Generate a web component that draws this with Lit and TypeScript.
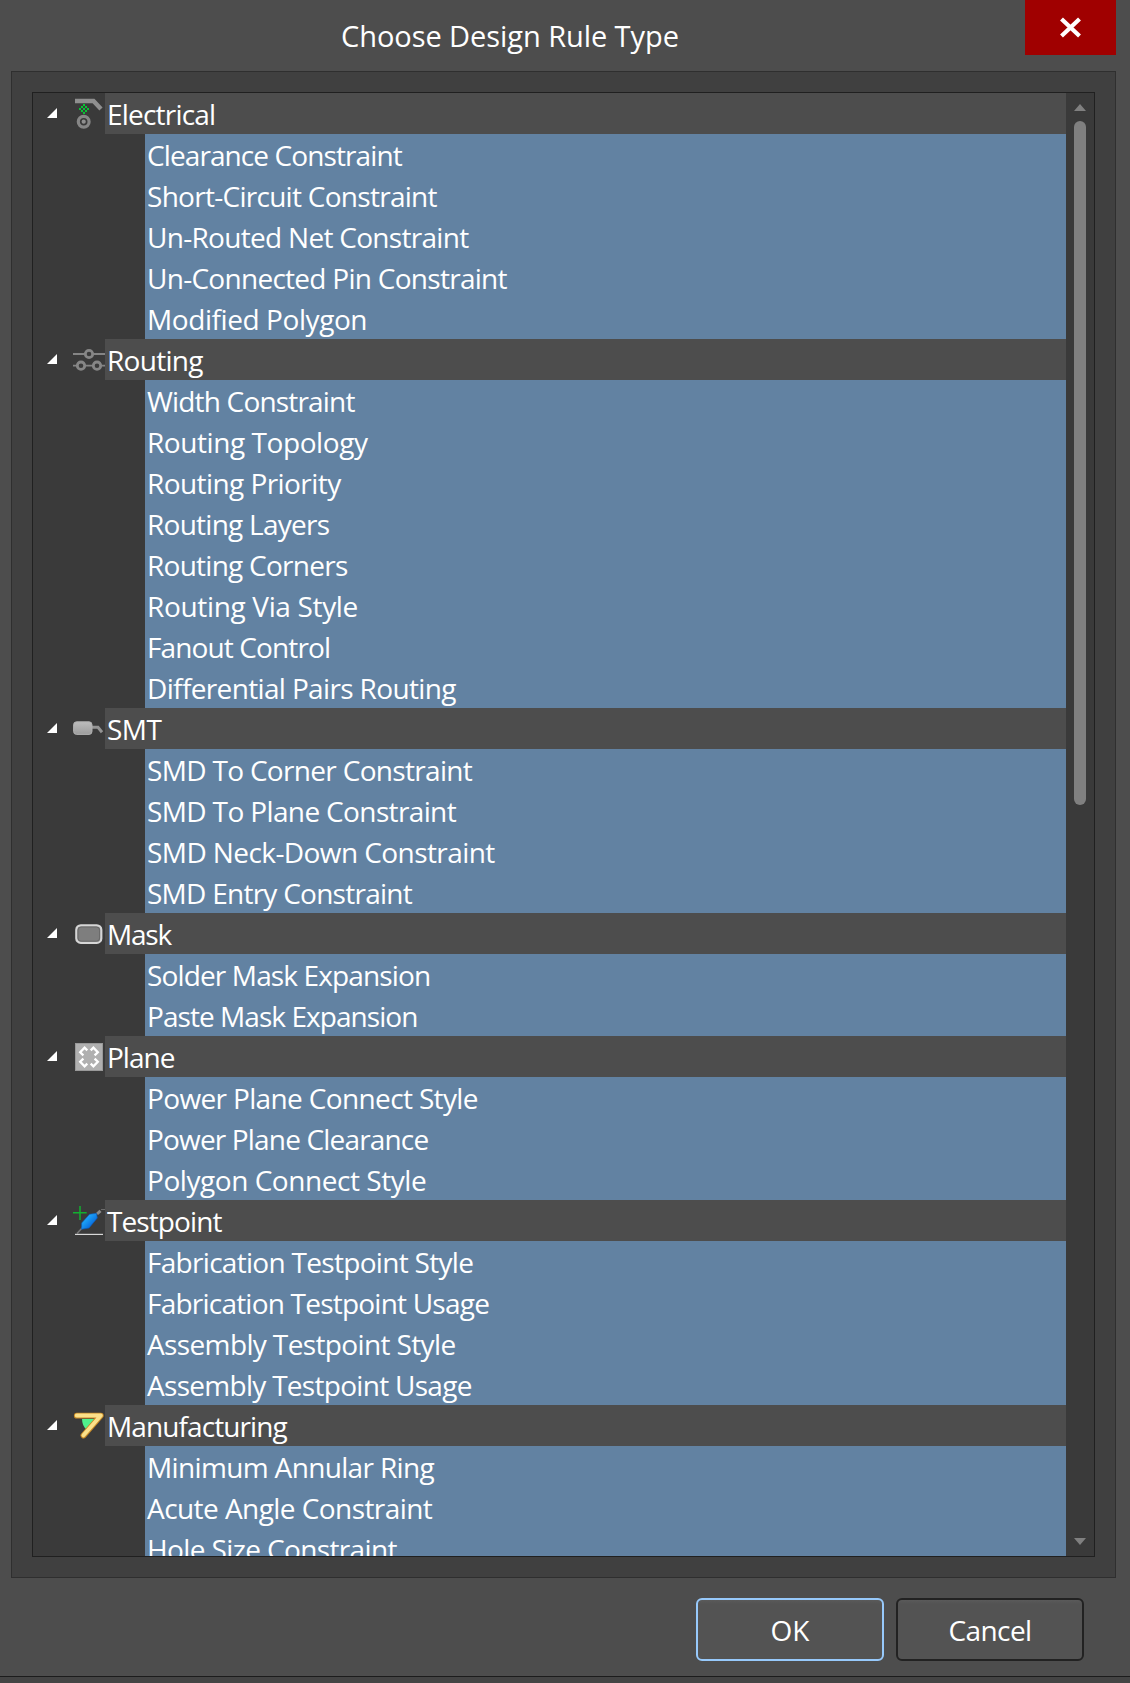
import { LitElement, html, css, svg } from "lit";
import { customElement, property } from "lit/decorators.js";

// A caption and its tracking in pixels.
type Caption = [text: string, tracking: number];

interface RuleGroup {
  name: Caption;
  icon: string;
  rules: Caption[];
}

const GROUPS: RuleGroup[] = [
  {
    name: ["Electrical", -0.8],
    icon: "electrical",
    rules: [
      ["Clearance Constraint", -0.9],
      ["Short-Circuit Constraint", -0.72],
      ["Un-Routed Net Constraint", -0.7],
      ["Un-Connected Pin Constraint", -0.72],
      ["Modified Polygon", -0.42],
    ],
  },
  {
    name: ["Routing", -0.7],
    icon: "routing",
    rules: [
      ["Width Constraint", -0.82],
      ["Routing Topology", -0.43],
      ["Routing Priority", -0.57],
      ["Routing Layers", -0.74],
      ["Routing Corners", -0.74],
      ["Routing Via Style", -0.34],
      ["Fanout Control", -0.88],
      ["Differential Pairs Routing", -0.64],
    ],
  },
  {
    name: ["SMT", -0.5],
    icon: "smt",
    rules: [
      ["SMD To Corner Constraint", -0.68],
      ["SMD To Plane Constraint", -0.63],
      ["SMD Neck-Down Constraint", -0.58],
      ["SMD Entry Constraint", -0.74],
    ],
  },
  {
    name: ["Mask", -1.2],
    icon: "mask",
    rules: [
      ["Solder Mask Expansion", -0.86],
      ["Paste Mask Expansion", -0.94],
    ],
  },
  {
    name: ["Plane", -1],
    icon: "plane",
    rules: [
      ["Power Plane Connect Style", -0.64],
      ["Power Plane Clearance", -0.83],
      ["Polygon Connect Style", -0.45],
    ],
  },
  {
    name: ["Testpoint", -0.9],
    icon: "testpoint",
    rules: [
      ["Fabrication Testpoint Style", -0.7],
      ["Fabrication Testpoint Usage", -0.78],
      ["Assembly Testpoint Style", -0.63],
      ["Assembly Testpoint Usage", -0.71],
    ],
  },
  {
    name: ["Manufacturing", -0.9],
    icon: "manufacturing",
    rules: [
      ["Minimum Annular Ring", -0.65],
      ["Acute Angle Constraint", -0.56],
      ["Hole Size Constraint", -0.62],
    ],
  },
];

// Top-left corners of the green cells in the electrical icon's diamond.
const CHECKER = [
  [11, 11], [9, 13], [13, 13], [7, 15], [11, 15], [15, 15], [9, 17], [13, 17], [11, 19],
];

const ICONS: Record<string, unknown> = {
  electrical: svg`
    <path d="M3 8H21.5L29 16" fill="none" stroke="#8f8f8f" stroke-width="4.4"/>
    <g fill="#06c634" shape-rendering="crispEdges">${CHECKER.map(([x, y]) => svg`<rect x=${x} y=${y} width="2" height="2"/>`)}</g>
    <circle cx="11.7" cy="28.7" r="5.4" fill="#3a3a3a" stroke="#868686" stroke-width="3.2"/>
    <circle cx="11.7" cy="28.7" r="2.1" fill="#8f8f8f"/>`,
  routing: svg`
    <path d="M1 15H33M1 26.7H33" stroke="#858585" stroke-width="1.8"/>
    <g fill="#3a3a3a" stroke="#868686" stroke-width="2.8">
      <circle cx="17" cy="15" r="3.7"/><circle cx="9" cy="26.7" r="3.7"/><circle cx="25" cy="26.7" r="3.7"/>
    </g>`,
  smt: svg`
    <defs><linearGradient id="g" x2="0" y2="1"><stop stop-color="#bdbdbd"/><stop offset="1" stop-color="#9c9c9c"/></linearGradient></defs>
    <path d="M20 19.3H26L30 24.3" fill="none" stroke="#949494" stroke-width="3"/>
    <rect x="1.6" y="13.8" width="18.4" height="12.6" rx="3" fill="url(#g)" stroke="#b0b0b0"/>`,
  mask: svg`
    <rect x="4.3" y="12.3" width="25" height="17.6" rx="4.5" fill="#7e7e7e" stroke="#d6d6d6" stroke-width="2.2"/>
    <rect x="6" y="14" width="21.6" height="14.2" rx="3.2" fill="none" stroke="#686868" stroke-width="1"/>`,
  plane: svg`
    <rect x="3.5" y="7.5" width="27" height="27" fill="#b0b0b0" stroke="#999"/>
    <g fill="none" stroke="#fff" stroke-width="2.3">
      <path d="M15.3 14.3L12.6 11.7L8.2 16.3L11.4 19.3"/>
      <path d="M18.7 14.3L21.4 11.7L25.8 16.3L22.6 19.3"/>
      <path d="M15.3 27.7L12.6 30.3L8.2 25.7L11.4 22.7"/>
      <path d="M18.7 27.7L21.4 30.3L25.8 25.7L22.6 22.7"/>
    </g>`,
  testpoint: svg`
    <defs><linearGradient id="b" x1="0" y1="0" x2="1" y2="1"><stop offset=".2" stop-color="#22b4ff"/><stop offset=".8" stop-color="#0560d8"/></linearGradient></defs>
    <path d="M1 12.7H14.7M8 6V20" stroke="#12b030" stroke-width="1.5"/>
    <path d="M5 33.5L12 26" stroke="#777" stroke-width="1.6"/>
    <path d="M29 9.5H33" stroke="#6c6c6c" stroke-width="1"/>
    <path d="M25 14L28.5 10.8" stroke="#8a8a8a" stroke-width="3"/>
    <path d="M9.5 29.3L9.7 23L17.5 14.3L24.5 13.3L25.3 18L17 28Z" fill="url(#b)" stroke="#0a5cc0" stroke-width=".6"/>
    <path d="M3 34.4H31" stroke="#d8d8d8" stroke-width="1.2"/>`,
  manufacturing: svg`
    <path d="M10 14H25L15 25Q10 21 10 14Z" fill="#4ff08c"/>
    <path d="M4.8 10.7H28.8L11.5 30.5" fill="none" stroke="#c98a26" stroke-width="5.8" stroke-linecap="round" stroke-linejoin="round"/>
    <path d="M4.8 10.5H28.8L11.5 30.3" fill="none" stroke="#fbe08a" stroke-width="4" stroke-linecap="round" stroke-linejoin="round"/>`,
};

@customElement("rule-icon")
class RuleIcon extends LitElement {
  @property() name = "";
  static styles = css`
    :host { display: block; width: 33px; height: 41px; }
    .glyph { display: block; }
  `;
  render() {
    return html`<svg class="glyph" width="33" height="41" viewBox="0 0 33 41">${ICONS[this.name]}</svg>`;
  }
}

@customElement("rule-group")
class RuleGroupElement extends LitElement {
  @property({ attribute: false }) group!: RuleGroup;
  static styles = css`
    :host { display: block; flex: none; }
    .head { display: flex; height: 41px; }
    .gutter { display: flex; width: 72px; flex: none; }
    .arrow { display: block; width: 39px; height: 41px; }
    .label, .rule { height: 41px; line-height: 41px; white-space: nowrap; padding: 1px 0 0 2px; box-sizing: border-box; }
    .label { flex: 1; background: #4d4d4d; }
    .rules { margin-left: 112px; background: #6282a2; }
  `;
  caption([text, tracking]: Caption) {
    return html`<span style="letter-spacing:${tracking}px">${text}</span>`;
  }
  render() {
    return html`
      <div class="head">
        <div class="gutter">
          <svg class="arrow" viewBox="0 0 39 41"><path d="M24 15V25H14Z" fill="#fff"/></svg>
          <rule-icon name=${this.group.icon}></rule-icon>
        </div>
        <div class="label">${this.caption(this.group.name)}</div>
      </div>
      <div class="rules">
        ${this.group.rules.map((r) => html`<div class="rule">${this.caption(r)}</div>`)}
      </div>
    `;
  }
}

@customElement("app-root")
class AppRoot extends LitElement {
  static styles = css`
    :host {
      display: block;
      color: #fff;
      font: 28px "Open Sans", "Noto Sans", sans-serif;
    }
    .window {
      display: flex; flex-direction: column; box-sizing: border-box;
      width: 1130px; height: 1683px; background: #4d4d4d; overflow: hidden;
    }
    .titlebar { display: flex; height: 71px; flex: none; padding-right: 14px; }
    .title { flex: 1; padding-left: 341px; line-height: 72px; white-space: nowrap; font-size: 29px; letter-spacing: -0.07px; }
    .close { width: 91px; height: 55px; background: #a00000; }
    .close svg { display: block; }
    .frame {
      box-sizing: border-box; width: 1105px; height: 1507px; margin-left: 11px; flex: none;
      padding: 20px; border: 1px solid #2f2f2f; background: #404040;
    }
    .tree {
      display: flex; box-sizing: border-box; width: 1063px; height: 1465px;
      border: 1px solid #202020; background: #3a3a3a; overflow: hidden;
    }
    .list { display: flex; flex-direction: column; width: 1033px; overflow: hidden; }
    .scroll { display: flex; flex-direction: column; align-items: center; width: 28px; padding: 11px 0; box-sizing: border-box; }
    .thumb { width: 12px; height: 684px; border-radius: 6px; background: #808080; margin-top: 10px; }
    .down { margin-top: auto; }
    .buttons { display: flex; gap: 12px; justify-content: flex-end; padding: 20px 46px 15px 0; flex: none; }
    .button {
      width: 188px; height: 63px; box-sizing: border-box; border: 2px solid #222; border-radius: 6px;
      background: linear-gradient(#5a5a5a 0, #535353 4px); line-height: 61px; text-align: center;
      letter-spacing: -0.6px;
    }
    .primary { border-color: #97c9fb; letter-spacing: 0; }
    .footer { flex: 1; border-top: 1px solid #1c1c1c; background: #444; }
  `;
  render() {
    return html`
      <div class="window">
        <div class="titlebar">
          <div class="title">Choose Design Rule Type</div>
          <div class="close">
            <svg width="91" height="55" viewBox="0 0 91 55"><path d="M36.5 19L54.5 36M54.5 19L36.5 36" stroke="#fff" stroke-width="4.2"/></svg>
          </div>
        </div>
        <div class="frame">
          <div class="tree">
            <div class="list">${GROUPS.map((g) => html`<rule-group .group=${g}></rule-group>`)}</div>
            <div class="scroll">
              <svg width="12" height="7" viewBox="0 0 12 7"><path d="M6 0L12 7H0Z" fill="#808080"/></svg>
              <div class="thumb"></div>
              <svg class="down" width="12" height="7" viewBox="0 0 12 7"><path d="M0 0H12L6 7Z" fill="#808080"/></svg>
            </div>
          </div>
        </div>
        <div class="buttons">
          <div class="button primary">OK</div>
          <div class="button">Cancel</div>
        </div>
        <div class="footer"></div>
      </div>
    `;
  }
}
